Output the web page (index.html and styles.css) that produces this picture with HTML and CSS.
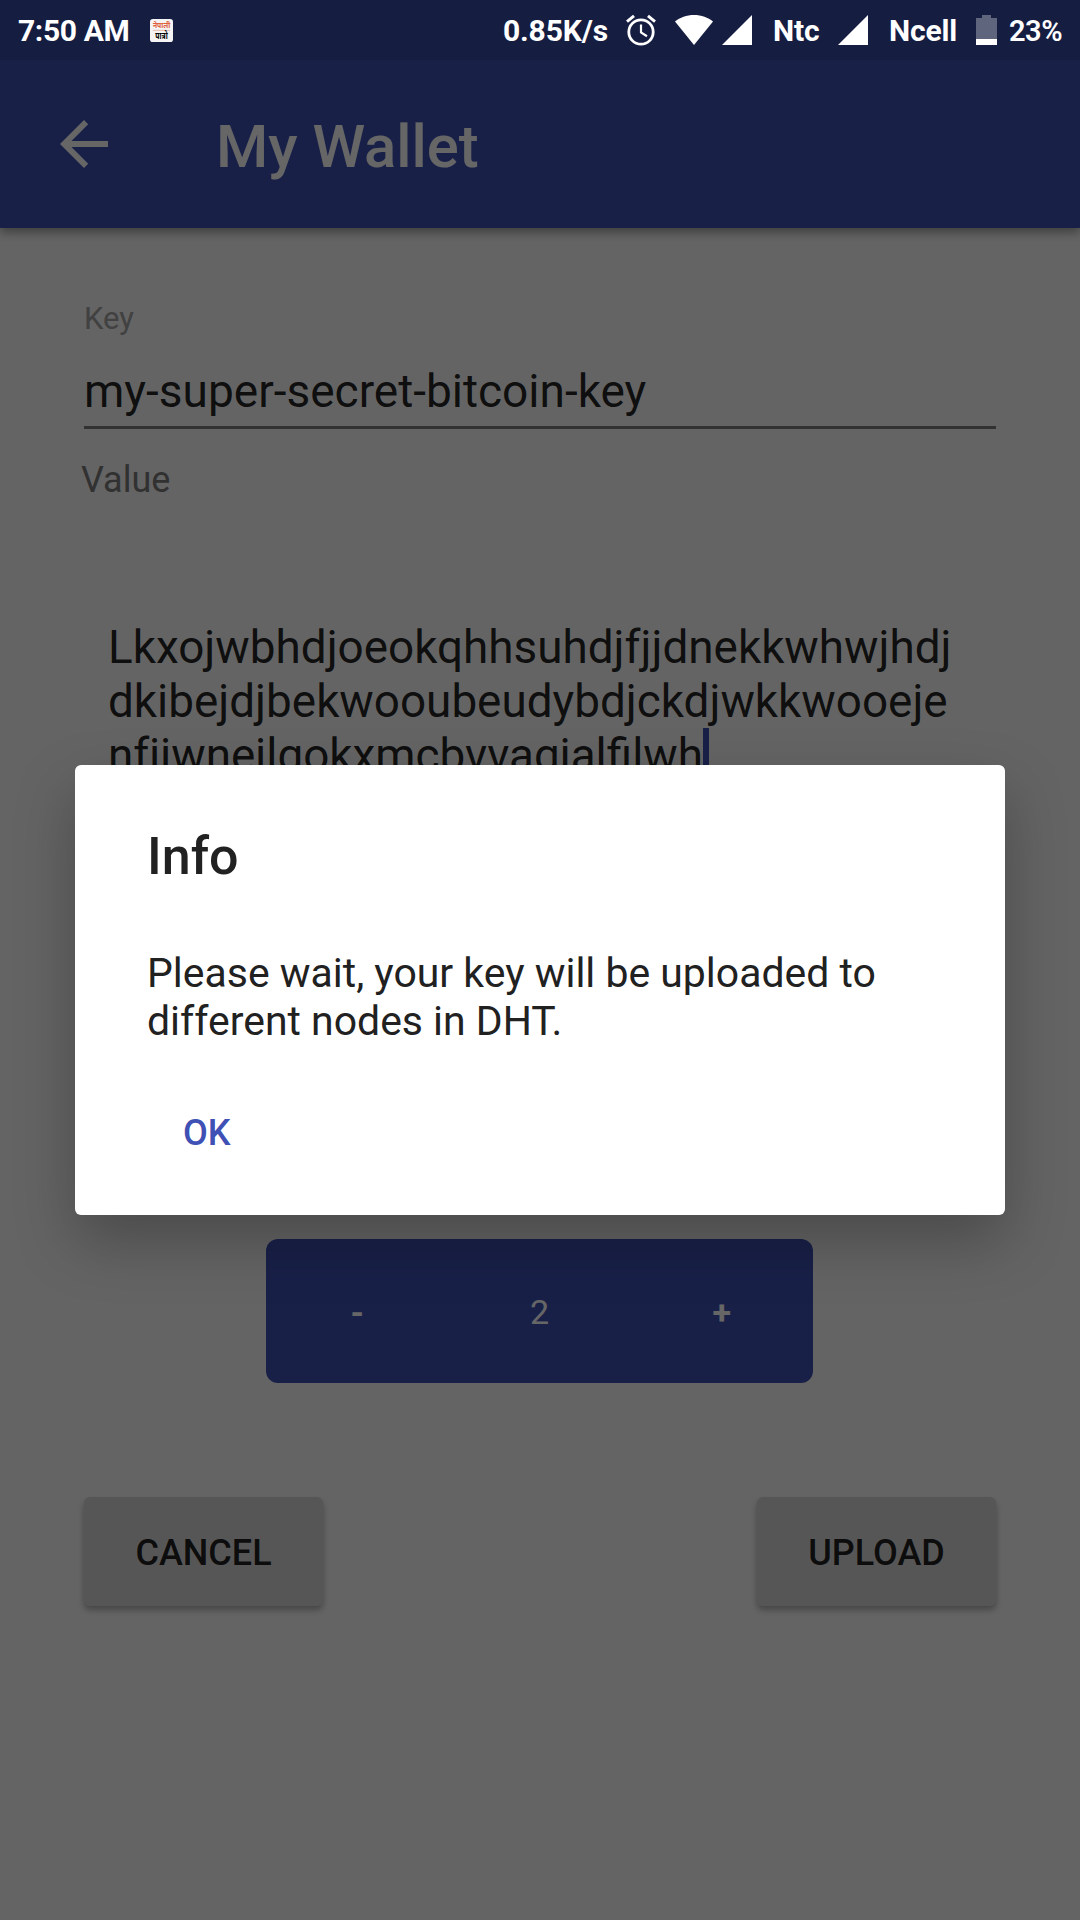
FILE: index.html
```html
<!DOCTYPE html>
<html lang="en">
<head>
<meta charset="utf-8">
<title>My Wallet</title>
<link rel="stylesheet" href="styles.css">
</head>
<body>
<div class="screen">
  <div class="app">
    <header class="app-bar">
      <svg class="back" viewBox="0 0 48 48"><path d="M48 21v6H11.5l16.7 16.8L24 48 0 24 24 0l4.2 4.2L11.5 21z"/></svg>
      <h1 class="title">My Wallet</h1>
    </header>
    <main class="form">
      <label class="key-label">Key</label>
      <div class="key-input">my-super-secret-bitcoin-key</div>
      <label class="value-label">Value</label>
      <div class="value-input">Lkxojwbhdjoeokqhhsuhdjfjjdnekkwhwjhdj<br>dkibejdjbekwooubeudybdjckdjwkkwooeje<br>nfjjwnejlgokxmcbvvagjalfilwh<span class="caret"></span></div>
      <div class="stepper"><span class="step">-</span><span class="count">2</span><span class="step">+</span></div>
      <div class="actions"><button class="button">CANCEL</button><button class="button">UPLOAD</button></div>
    </main>
  </div>
  <div class="scrim">
    <section class="dialog">
      <h2 class="dialog-title">Info</h2>
      <p class="dialog-text">Please wait, your key will be uploaded to different nodes in DHT.</p>
      <button class="dialog-ok">OK</button>
    </section>
  </div>
  <div class="status-bar">
    <span class="clock">7:50 AM</span>
    <svg class="calendar" viewBox="0 0 24 24">
      <rect width="24" height="24" rx="3" fill="#f4f4f4"/>
      <text class="cal-top" x="12" y="9.8" textLength="18" lengthAdjust="spacingAndGlyphs">नेपाली</text>
      <path d="M3 11.9h18" stroke="#e8a08c" stroke-width=".7"/>
      <text class="cal-bottom" x="12" y="20.5" textLength="13" lengthAdjust="spacingAndGlyphs">पात्रो</text>
    </svg>
    <span class="speed">0.85K/s</span>
    <svg class="alarm" viewBox="0 0 30 30"><g fill="none" stroke="#fff"><circle cx="15" cy="17" r="12.2" stroke-width="2.8"/><path d="M15 9.5v8l6 3.7" stroke-width="2.2"/><path d="M1 6.6 8 .9M29 6.6 22 .9" stroke-width="3"/></g></svg>
    <svg class="wifi" viewBox="0 0 38 30"><path d="M19 30 0 6.5C5 2.5 11.500 0 19 0s14 2.500 19 6.500z"/></svg>
    <svg class="signal" viewBox="0 0 30 30"><path d="M30 0v30H0z"/></svg>
    <span class="sim-one">Ntc</span>
    <svg class="signal" viewBox="0 0 30 30"><path d="M30 0v30H0z"/></svg>
    <span class="sim-two">Ncell</span>
    <svg class="battery" viewBox="0 0 21 30"><path d="M6 0h9v3h6v21H0V3h6z" fill-opacity=".32"/><path d="M0 24h21v6H0z"/></svg>
    <span class="percent">23%</span>
  </div>
</div>
</body>
</html>
```
FILE: styles.css
```css
* { box-sizing: border-box; }
body { margin: 0; font-family: Roboto, sans-serif; }
h1, h2, p { margin: 0; }
button { border: 0; padding: 0; background: none; font: inherit; }
svg { display: block; flex: none; overflow: visible; }

.screen { position: relative; width: 1080px; height: 1920px; overflow: hidden; background: #fafafa; }

.app-bar {
  display: flex;
  align-items: center;
  height: 228px;
  padding: 60px 0 0 60px;
  background: linear-gradient(#3649a3 60px, #3f51b5 60px);
  color: #fff;
  box-shadow: 0 4px 10px rgba(0, 0, 0, .4);
}
.back { width: 48px; height: 48px; fill: #fff; }
.title { margin-left: 108px; padding-top: 6px; font-size: 59.8px; font-weight: 500; line-height: 70px; white-space: nowrap; }

.form { display: flex; flex-direction: column; padding: 73px 84px 0; color: rgba(0, 0, 0, .87); }
.key-label { font-size: 31px; line-height: 36px; color: #a2a2a2; }
.key-input { margin-top: 27px; padding-bottom: 8px; border-bottom: 3px solid #7d7d7d; font-size: 46px; line-height: 54px; }
.value-label { margin: 30px 0 0 -3px; font-size: 36px; line-height: 42px; color: #7a7a7a; }
.value-input { height: 162px; margin: 119px 0 0 24px; font-size: 45.85px; line-height: 54px; white-space: nowrap; }
.caret { display: inline-block; width: 6px; height: 54px; vertical-align: top; background: #3f51b5; }

.stepper {
  display: grid;
  grid-template-columns: repeat(3, 1fr);
  align-items: center;
  width: 547px;
  height: 144px;
  margin: 457px 0 0 182px;
  padding-top: 2px;
  border-radius: 12px;
  background: #3f51b5;
  color: #fff;
  text-align: center;
  line-height: 42px;
}
.step { font-size: 34px; font-weight: 700; }
.count { font-size: 34px; }

.actions { display: flex; justify-content: space-between; margin-top: 114px; }
.button {
  width: 239px;
  height: 109px;
  padding-top: 2px;
  border-radius: 6px;
  background: #d8d8d8;
  box-shadow: 0 4px 6px rgba(0, 0, 0, .3);
  color: rgba(0, 0, 0, .87);
  font-size: 36px;
  font-weight: 500;
}

.scrim { position: absolute; inset: 0; padding: 765px 75px 0; background: rgba(0, 0, 0, .6); }
.dialog {
  height: 450px;
  padding: 62px 72px 0;
  border-radius: 6px;
  background: #fff;
  color: #212121;
  box-shadow: 0 26px 60px rgba(0, 0, 0, .26);
}
.dialog-title { font-size: 52px; font-weight: 500; line-height: 60px; }
.dialog-text { margin-top: 62px; font-size: 40.95px; line-height: 48px; }
.dialog-ok { display: block; margin: 67px 0 0 36px; color: #3f51b5; font-size: 36px; font-weight: 500; line-height: 42px; }

.status-bar {
  position: absolute;
  inset: 0 0 auto;
  display: flex;
  align-items: center;
  height: 60px;
  color: #fff;
  fill: #fff;
  font-size: 30px;
  font-weight: 700;
  line-height: 36px;
  white-space: nowrap;
}
.status-bar span { padding-top: 1px; letter-spacing: -.15px; }
.status-bar .clock { width: 132px; padding-left: 18px; letter-spacing: -.35px; }
.calendar { width: 23px; height: 23px; margin: 0 330px 0 18px; }
.cal-top, .cal-bottom { font-family: "Noto Sans", sans-serif; text-anchor: middle; }
.cal-top { fill: #e0603c; font-size: 8.5px; }
.cal-bottom { fill: #000; font-size: 9.5px; }
.speed { width: 123px; }
.alarm { width: 30px; height: 30px; }
.wifi { width: 38px; height: 30px; margin: 0 9px 0 19px; }
.signal { width: 30px; height: 30px; }
.sim-one { width: 65px; margin-left: 21px; }
.sim-two { width: 87px; margin-left: 21px; }
.battery { width: 21px; height: 30px; }
.status-bar .percent { margin-left: 12px; font-size: 29px; font-weight: 600; letter-spacing: -.5px; }
```
